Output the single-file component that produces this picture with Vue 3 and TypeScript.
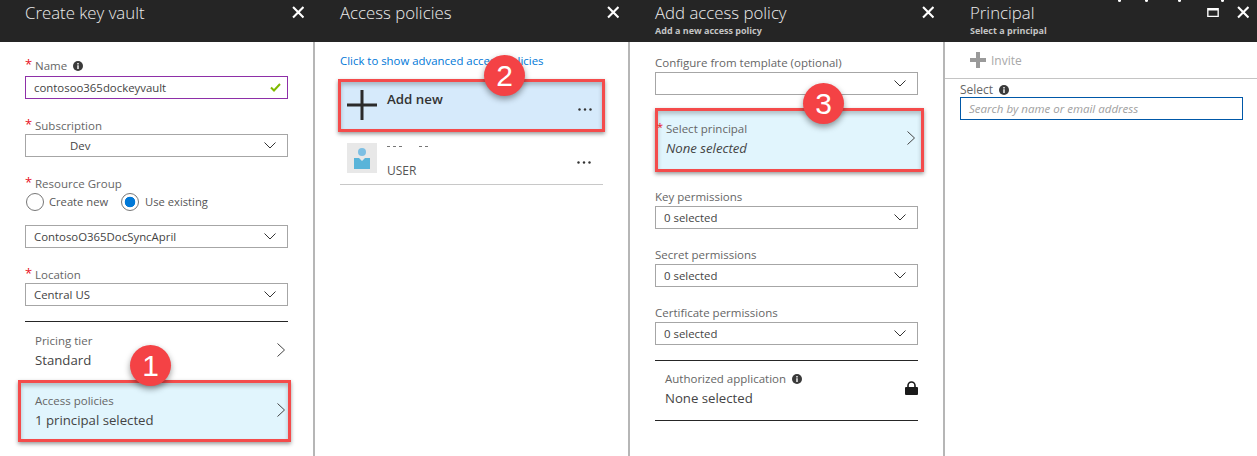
<script setup lang="ts">
const perms: string[] = ['Key permissions', 'Secret permissions', 'Certificate permissions']
</script>

<template>
  <div class="page">
    <div class="heads">
      <div class="head h1"><div class="titles"><div class="title">Create key vault</div></div><svg class="x" viewBox="0 0 12 12"><path d="M1 1l10 10M11 1L1 11"/></svg></div>
      <div class="head h2"><div class="titles"><div class="title">Access policies</div></div><svg class="x" viewBox="0 0 12 12"><path d="M1 1l10 10M11 1L1 11"/></svg></div>
      <div class="head h3"><div class="titles"><div class="title">Add access policy</div><div class="sub">Add a new access policy</div></div><svg class="x" viewBox="0 0 12 12"><path d="M1 1l10 10M11 1L1 11"/></svg></div>
      <div class="head h4">
        <div class="titles"><div class="title">Principal</div><div class="sub">Select a principal</div></div>
        <svg class="max" viewBox="0 0 13 10"><path d="M.75.75h11.5v8.5H.75zM.75 2h11.5" /></svg>
        <svg class="x" viewBox="0 0 12 12"><path d="M1 1l10 10M11 1L1 11"/></svg>
        <i class="dot d1"></i><i class="dot d2"></i><i class="dot d3"></i><i class="dot d4"></i>
      </div>
    </div>

    <div class="blades">
      <section class="blade b1">
        <div class="label first"><span class="req">*</span>Name<svg class="info" viewBox="0 0 10 10"><circle cx="5" cy="5" r="5"/><path d="M4.3 2h1.4v1.4H4.3zM4.3 4.3h1.4V8H4.3z" fill="#fff"/></svg></div>
        <div class="ctl valid"><span>contosoo365dockeyvault</span><svg class="check" viewBox="0 0 11 9"><path d="M1 4.5l3 3L10 1"/></svg></div>
        <div class="label"><span class="req">*</span>Subscription</div>
        <div class="ctl"><span class="dev">Dev</span><svg class="chev" viewBox="0 0 12 7"><path d="M.5.5L6 6 11.5.5"/></svg></div>
        <div class="label"><span class="req">*</span>Resource Group</div>
        <div class="radios">
          <span class="radio"></span><span class="rt">Create new</span>
          <span class="radio on"></span><span class="rt">Use existing</span>
        </div>
        <div class="ctl rg"><span>ContosoO365DocSyncApril</span><svg class="chev" viewBox="0 0 12 7"><path d="M.5.5L6 6 11.5.5"/></svg></div>
        <div class="label"><span class="req">*</span>Location</div>
        <div class="ctl"><span>Central US</span><svg class="chev" viewBox="0 0 12 7"><path d="M.5.5L6 6 11.5.5"/></svg></div>
        <div class="rule r1"></div>
        <div class="nav pricing">
          <div><div class="nl">Pricing tier</div><div class="nv">Standard</div></div>
          <svg class="right" viewBox="0 0 8 14"><path d="M.5.5L7.5 7 .5 13.5"/></svg>
        </div>
        <div class="nav mark policies">
          <div><div class="nl">Access policies</div><div class="nv">1 principal selected</div></div>
          <svg class="right" viewBox="0 0 8 14"><path d="M.5.5L7.5 7 .5 13.5"/></svg>
          <span class="badge">1</span>
        </div>
      </section>

      <section class="blade b2">
        <div class="link">Click to show advanced access policies</div>
        <div class="mark addnew">
          <svg class="plus" viewBox="0 0 30 30"><path d="M15 0v30M0 15h30"/></svg>
          <span class="addt">Add new</span>
          <svg class="more" viewBox="0 0 14 3"><circle cx="1.5" cy="1.5" r="1.2"/><circle cx="7" cy="1.5" r="1.2"/><circle cx="12.5" cy="1.5" r="1.2"/></svg>
          <span class="badge">2</span>
        </div>
        <div class="user">
          <svg class="avatar" viewBox="0 0 30 30"><rect width="30" height="30" fill="#e8e8e8"/><circle cx="15" cy="9" r="4" fill="#7dbfe3"/><path d="M7 15h5l3 3 3-3h5v11H7z" fill="#59b4d9"/></svg>
          <div class="uname"><i></i><i></i><i></i><i class="gap"></i><i></i></div>
          <span class="ut">USER</span>
          <svg class="more" viewBox="0 0 14 3"><circle cx="1.5" cy="1.5" r="1.2"/><circle cx="7" cy="1.5" r="1.2"/><circle cx="12.5" cy="1.5" r="1.2"/></svg>
        </div>
      </section>

      <section class="blade b3">
        <div class="label3 l0">Configure from template (optional)</div>
        <div class="ctl"><span></span><svg class="chev" viewBox="0 0 12 7"><path d="M.5.5L6 6 11.5.5"/></svg></div>
        <div class="nav mark principal">
          <span class="req3">*</span>
          <div><div class="nl">Select principal</div><div class="nv it">None selected</div></div>
          <svg class="right" viewBox="0 0 8 14"><path d="M.5.5L7.5 7 .5 13.5"/></svg>
          <span class="badge">3</span>
        </div>
        <template v-for="p in perms" :key="p">
          <div class="label3">{{ p }}</div>
          <div class="ctl"><span>0 selected</span><svg class="chev" viewBox="0 0 12 7"><path d="M.5.5L6 6 11.5.5"/></svg></div>
        </template>
        <div class="rule r2"></div>
        <div class="nav auth">
          <div><div class="nl">Authorized application<svg class="info" viewBox="0 0 10 10"><circle cx="5" cy="5" r="5"/><path d="M4.3 2h1.4v1.4H4.3zM4.3 4.3h1.4V8H4.3z" fill="#fff"/></svg></div><div class="nv">None selected</div></div>
          <svg class="lock" viewBox="0 0 13 14"><path d="M3 6.5V4.5a3.5 3.5 0 0 1 7 0v2" fill="none" stroke="#1a1a1a" stroke-width="1.6"/><rect y="6" width="13" height="8" rx="1" fill="#1a1a1a"/></svg>
        </div>
        <div class="rule r3"></div>
      </section>

      <section class="blade b4">
        <div class="cmd"><svg class="iplus" viewBox="0 0 16 16"><path d="M8 0v16M0 8h16"/></svg><span>Invite</span></div>
        <div class="sel">
          <div class="label4">Select<svg class="info" viewBox="0 0 10 10"><circle cx="5" cy="5" r="5"/><path d="M4.3 2h1.4v1.4H4.3zM4.3 4.3h1.4V8H4.3z" fill="#fff"/></svg></div>
          <div class="search">Search by name or email address</div>
        </div>
      </section>
    </div>
  </div>
</template>

<style>
html, body { margin: 0; background: #fff; }
</style>

<style scoped>
.page { width: 1257px; height: 456px; overflow: hidden; font-family: "Open Sans", "Noto Sans", sans-serif; color: #333; background: #fff; }
.heads { display: flex; height: 42px; background: #252525; }
.head { position: relative; display: flex; align-items: flex-start; box-sizing: border-box; height: 42px; }
.h1 { width: 315px; padding-left: 25px; }
.h2 { width: 315px; padding-left: 25px; }
.h3 { width: 315px; padding-left: 25px; }
.h4 { width: 312px; padding-left: 25px; }
.titles { flex: 1; color: #ececec; }
.title { font-size: 16.8px; font-weight: 300; line-height: 26px; }
.sub { font-size: 9px; font-weight: 700; line-height: 11px; margin-top: -1px; color: #c4c4c4; }
.x { position: absolute; top: 6px; right: 11px; width: 12.5px; height: 12.5px; fill: none; stroke: #fff; stroke-width: 2; }
.h4 .x { right: 8px; }
.max { position: absolute; top: 8px; right: 38px; width: 12px; height: 9px; fill: none; stroke: #fff; stroke-width: 1.5; }
.dot { position: absolute; top: -1px; width: 3px; height: 3px; border-radius: 50%; background: #fff; }
.d1 { left: 173px; } .d2 { left: 200px; } .d3 { left: 233px; } .d4 { left: 276px; }

.blades { display: flex; height: 414px; }
.blade { position: relative; box-sizing: border-box; width: 315px; border-right: 2px solid #b6b6b6; padding: 0 25px; font-size: 12px; }
.b4 { width: 312px; border-right: 0; padding: 0; }

.label { position: relative; font-size: 11.5px; line-height: 16px; color: #666; margin: 19px 0 0 10px; }
.label.first { margin-top: 16px; }
.req { position: absolute; left: -10px; top: -2px; color: #e81123; font-size: 13px; }
.info { display: inline-block; width: 10px; height: 10px; margin-left: 6px; fill: #3a3a3a; vertical-align: -1px; }
.ctl { display: flex; align-items: center; justify-content: space-between; box-sizing: border-box; height: 23px; padding: 0 8px; border: 1px solid #a6a6a6; font-size: 11.4px; color: #444; }
.valid { border-color: #8e2fa8; margin-top: 2px; }
.dev { margin-left: 36px; }
.chev { width: 12px; height: 7px; margin-right: 3px; fill: none; stroke: #333; stroke-width: 1; }
.check { width: 11px; height: 9px; margin-right: -2px; fill: none; stroke: #7fba00; stroke-width: 2; }
.radios { display: flex; align-items: center; height: 19px; margin-top: 0; font-size: 11.2px; color: #555; }
.radio { box-sizing: border-box; width: 18px; height: 18px; border: 1px solid #777; border-radius: 50%; margin: 0 5px 0 1px; }
.radio.on { margin-left: 13px; margin-right: 6px; background: radial-gradient(circle, #0078d7 0 5px, #fff 5.6px); }
.ctl.rg { margin-top: 14px; }
.rule { height: 1px; background: #262626; }
.r1 { margin-top: 15px; }
.nav { position: relative; display: flex; align-items: center; justify-content: space-between; box-sizing: border-box; }
.nl { font-size: 11.5px; line-height: 19px; color: #666; }
.nv { font-size: 13.2px; line-height: 19px; margin-top: 1px; color: #444; }
.it { font-style: italic; }
.right { width: 8px; height: 14px; fill: none; stroke: #444; stroke-width: 1; }
.pricing { height: 58px; padding: 0 3px 2px 10px; }
.mark { position: relative; background: #e1f5fd; border: 3px solid #f44b4b; box-shadow: 0 2px 4px rgba(0,0,0,.4), inset 0 3px 4px rgba(0,0,0,.22); }
.policies { height: 62px; margin: 0 -3px 0 -7px; padding: 0 0 2px 14px; }
.policies .right { margin-right: 3px; }
.badge { position: absolute; width: 41px; height: 41px; border-radius: 50%; background: #f44245; color: #fff; font-family: "Liberation Sans", sans-serif; font-size: 30px; line-height: 41px; text-align: center; box-shadow: 0 3px 6px rgba(0,0,0,.4); }
.policies .badge { left: 109px; top: -38px; }

.link { margin-top: 11px; font-size: 11.4px; line-height: 16px; color: #0078d7; }
.addnew { box-sizing: border-box; height: 53px; margin: 10px -2px 0 -2px; background: #d6eafb; }
.plus { position: absolute; left: 6px; top: 8px; width: 30px; height: 30px; fill: none; stroke: #2b2b2b; stroke-width: 3; }
.addt { position: absolute; left: 46px; top: 8px; font-size: 13.3px; font-weight: 600; line-height: 18px; color: #333; }
.more { position: absolute; right: 10px; width: 14px; height: 3px; fill: #333; }
.addnew .more { top: 26px; }
.addnew .badge { left: 143px; top: -27px; }
.principal .badge { left: 145px; top: -28px; }
.user { position: relative; height: 52px; margin-top: 0; border-bottom: 1px solid #c8c8c8; }
.avatar { position: absolute; left: 7px; top: 11px; width: 30px; height: 30px; }
.uname { position: absolute; left: 47px; top: 14px; display: flex; gap: 3px; }
.uname i { width: 3px; height: 1px; background: #777; }
.uname .gap { margin-left: 14px; }
.ut { position: absolute; left: 47px; top: 31px; font-size: 12px; line-height: 16px; color: #555; }
.user .more { top: 29px; right: 12px; }

.label3 { font-size: 11.5px; line-height: 16px; color: #666; margin: 18px 0 1px; }
.label3.l0 { margin-top: 13px; }
.principal { height: 64px; margin: 13px -6px -1px 0; padding: 0 6px 4px 8px; }
.req3 { position: absolute; left: -1px; top: 8px; color: #e81123; font-size: 11px; }
.r2 { margin-top: 15px; }
.auth { height: 59px; padding: 0 0 5px 10px; }
.auth .info { margin-left: 6px; }
.lock { width: 13px; height: 14px; margin-top: -1px; }

.cmd { display: flex; align-items: center; height: 35px; padding: 1px 0 0 25px; border-bottom: 1px solid #c4c4c4; color: #a8a8a8; font-size: 12px; }
.iplus { width: 16px; height: 16px; margin: -1px 5px 0 0; fill: none; stroke: #9a9a9a; stroke-width: 4; }
.sel { padding: 2px 14px 0 15px; }
.label4 { font-size: 12px; line-height: 17px; color: #666; margin-bottom: -1px; }
.search { box-sizing: border-box; height: 23px; border: 1px solid #0058a8; padding-left: 8px; font-size: 11.5px; line-height: 21px; font-style: italic; color: #a0a0a0; }
</style>
